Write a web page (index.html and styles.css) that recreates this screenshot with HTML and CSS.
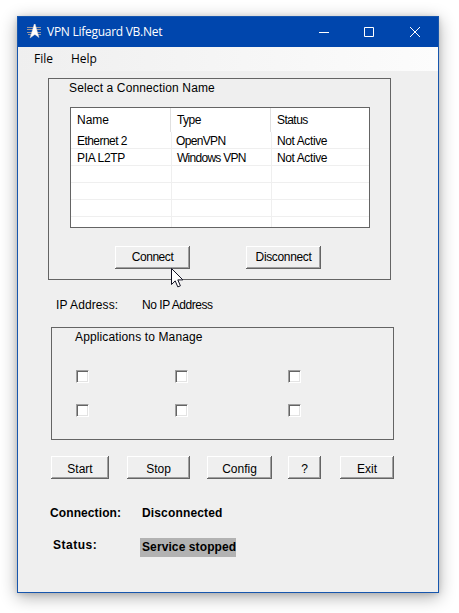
FILE: index.html
```html
<!DOCTYPE html>
<html lang="en">
<head>
<meta charset="utf-8">
<title>VPN Lifeguard VB.Net</title>
<link rel="stylesheet" href="styles.css">
</head>
<body>
<main class="window">
  <header class="titlebar">
    <svg class="logo" width="15" height="15" viewBox="0 0 15 15">
      <path d="M0 3.5h14M0 5.5h14M0 8.5h14M1 10.5h13" stroke="#9a969a"/>
      <path d="M7.3 0h.8L12 13.5 7.9 10.4 3 14Z" fill="#fff" stroke="#d8d0ca" stroke-width=".5"/>
    </svg>
    <h1 class="title">VPN Lifeguard VB.Net</h1>
    <svg class="controls" width="102" height="12" viewBox="0 0 102 12" fill="none" stroke="#fff">
      <path d="M0 6.5h10M45.5 1.5h9v9h-9z"/>
      <path d="M91 1l10 10M101 1 91 11"/>
    </svg>
  </header>
  <nav class="menu"><span class="file">File</span><span class="help">Help</span></nav>
  <section class="group connections">
    <h2 class="caption select-caption">Select a Connection Name</h2>
    <div class="list">
      <div class="row head"><span>Name</span><span class="tight">Type</span><span class="tight">Status</span></div>
      <div class="row"><span class="tight">Ethernet 2</span><span class="openvpn">OpenVPN</span><span>Not Active</span></div>
      <div class="row"><span class="pia">PIA L2TP</span><span class="windows">Windows VPN</span><span>Not Active</span></div>
      <div class="row"><span></span><span></span><span></span></div>
      <div class="row"><span></span><span></span><span></span></div>
      <div class="row"><span></span><span></span><span></span></div>
      <div class="row last"><span></span><span></span><span></span></div>
    </div>
    <div class="connect-actions">
      <button class="connect">Connect</button>
      <button class="disconnect">Disconnect</button>
    </div>
    <svg class="cursor" width="14" height="21" viewBox="0 0 14 21">
      <path d="M.5.5v16l3.7-3.6 2.6 6 2.6-1.1-2.6-5.9h5.1Z" fill="#fff" stroke="#111122"/>
    </svg>
  </section>
  <div class="ip"><span class="ip-label">IP Address:</span><span class="ip-value">No IP Address</span></div>
  <section class="group applications">
    <h2 class="caption apps-caption">Applications to Manage</h2>
    <div class="checks"><i></i><i></i><i></i><i></i><i></i><i></i></div>
  </section>
  <div class="actions">
    <button class="start">Start</button>
    <button class="stop">Stop</button>
    <button class="config">Config</button>
    <button class="about">?</button>
    <button class="exit">Exit</button>
  </div>
  <div class="state connection"><span class="conn-label">Connection:</span><span class="conn-value">Disconnected</span></div>
  <div class="state status"><span class="status-label">Status:</span><span class="status-value">Service stopped</span></div>
</main>
</body>
</html>
```
FILE: styles.css
```css
* { box-sizing: border-box; }
body { margin: 0; padding: 16px 0 0 17px; background: #fff; color: #000; height: 613px; overflow: hidden; font: 12px/15px "Liberation Sans", Arial, sans-serif; }
h1, h2 { margin: 0; font: inherit; }
span, h1, h2, button { white-space: nowrap; }
svg { display: block; }
.window { width: 422px; height: 577px; border: 1px solid #1756ad; background: #efefef; box-shadow: 0 4px 16px rgba(0,0,0,.32), 0 1px 5px rgba(0,0,0,.14); display: flex; flex-direction: column; }
.titlebar { height: 30px; flex: none; background: #0046ad; color: #fff; display: flex; align-items: center; padding: 0 17px 0 9px; }
.logo { margin-top: -1px; }
.title { margin-left: 5px; font: 12px/18px "Open Sans", sans-serif; letter-spacing: -.27px; }
.controls { margin-left: auto; }
.menu { height: 24px; flex: none; background: linear-gradient(90deg, #efefef, #fcfcfc); font: 12px/24px "Open Sans", sans-serif; padding-left: 16px; }
.help { margin-left: 18px; }
.group { border: 1px solid #646464; flex: none; width: 343px; }
.connections { position: relative; height: 202px; margin: 7px 0 0 30px; }
.caption { font-size: 12px; line-height: 15px; letter-spacing: .13px; }
.select-caption { margin: 2px 0 0 20px; }
.list { width: 300px; height: 121px; margin: 11px 0 0 21px; border: 1px solid #646464; background: #fff; overflow: hidden; }
.row { display: grid; grid-template-columns: 101px 100px 1fr; height: 17px; border-bottom: 1px solid #efefef; line-height: 19px; letter-spacing: -.4px; }
.row span { height: 16px; padding-left: 6px; border-right: 1px solid #efefef; }
.row span:last-child { border-right: 0; }
.row.head { height: 24px; border: 0; line-height: 25px; grid-template-columns: 100px 100px 1fr; letter-spacing: 0; }
.row.head span { height: 24px; border-color: #e0e0e0; }
.row span + span { padding-left: 5px; }
.row .openvpn { padding-left: 4px; letter-spacing: -.65px; }
.row .windows { letter-spacing: -.72px; }
.row .pia { letter-spacing: -.35px; }
.row .tight { letter-spacing: -.55px; }
.row.head span + span { padding-left: 6px; }
.connect-actions { display: flex; gap: 56px; margin: 18px 0 0 66px; }
button { height: 23px; flex: none; padding: 0; border: 0; background: #efefef; color: #000; font: 12px/22px "Liberation Sans", Arial, sans-serif; box-shadow: inset -1px -1px #646464, inset 1px 1px #fff, inset -2px -2px #a0a0a0; }
.connect, .disconnect { width: 75px; padding-bottom: 2px; letter-spacing: -.45px; }
.disconnect { letter-spacing: -.35px; }
.cursor { position: absolute; left: 122px; top: 189px; }
.ip { height: 15px; flex: none; display: flex; margin: 18px 0 0 38px; }
.ip-label { width: 86px; letter-spacing: .1px; }
.ip-value { letter-spacing: -.45px; }
.applications { height: 113px; margin: 14px 0 0 33px; }
.apps-caption { margin: 2px 0 0 23px; }
.checks { display: grid; grid-template-columns: 99px 113px 13px; row-gap: 21px; margin: 25px 0 0 24px; }
.checks i { width: 13px; height: 13px; background: #fff; border: 1px solid; border-color: #a0a0a0 #fff #fff #a0a0a0; box-shadow: inset 1px 1px #646464, inset -1px -1px #e3e3e3; }
.actions { display: flex; margin: 16px 0 0 33px; flex: none; }
.actions button { padding-top: 2px; }
.start { width: 58px; }
.stop { width: 63px; margin-left: 18px; }
.config { width: 65px; margin-left: 17px; }
.about { width: 33px; margin-left: 16px; }
.exit { width: 54px; margin-left: 19px; }
.state { display: flex; flex: none; font-weight: bold; }
.connection { margin: 27px 0 0 32px; height: 15px; }
.conn-label { width: 92px; letter-spacing: .1px; }
.conn-value { letter-spacing: .15px; }
.status { margin: 17px 0 0 35px; }
.status-label { width: 87px; letter-spacing: .5px; }
.status-value { width: 96px; height: 19px; background: #b2b2b2; line-height: 18px; padding-left: 2px; letter-spacing: .1px; }
```
